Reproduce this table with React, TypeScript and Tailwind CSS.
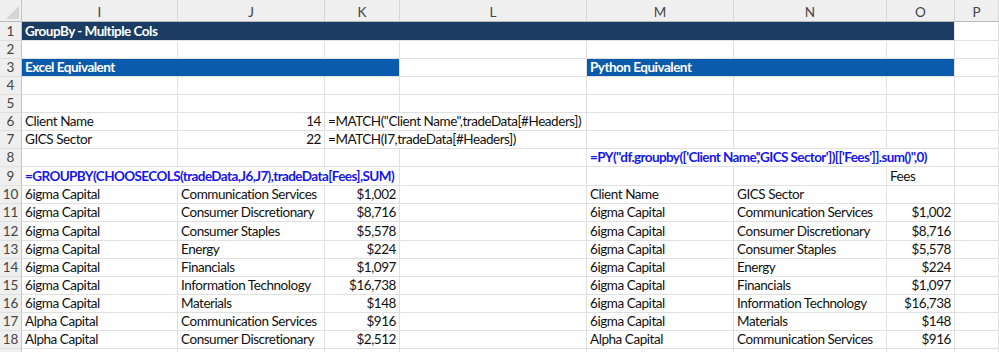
import type { ReactNode } from 'react'

// --- Config ---

const GRID = 'grid grid-cols-[22px_156px_147px_75px_187px_147px_153px_68px_1fr]'
const LETTERS = ['I', 'J', 'K', 'L', 'M', 'N', 'O', 'P']

const SPAN: Record<number, string> = {
  1: 'col-span-1',
  2: 'col-span-2',
  3: 'col-span-3',
  7: 'col-span-7',
}

type Cell = {
  col: number
  span?: number
  text?: ReactNode
  right?: boolean
  cls?: string
}

// --- Cells ---

function GridCell({ cell }: { cell: Cell }) {
  const span = cell.span ?? 1
  return (
    <div
      className={`${SPAN[span]} flex items-end overflow-visible border-r border-b border-[#e0e0e0] px-[3px] pb-[1px] whitespace-nowrap ${cell.right ? 'justify-end' : ''} ${cell.cls ?? ''}`}
    >
      {cell.text}
    </div>
  )
}

function Row({ n, h, cells = [] }: { n?: number; h: string; cells?: Cell[] }) {
  const filled: Cell[] = []
  let c = 0
  while (c < LETTERS.length) {
    const found = cells.find((x) => x.col === c)
    if (found) {
      filled.push(found)
      c += found.span ?? 1
    } else {
      filled.push({ col: c })
      c += 1
    }
  }
  return (
    <div className={`${GRID} ${h}`}>
      <div className="flex items-end justify-center border-r border-b border-r-[#c4c4c4] border-b-[#e0e0e0] bg-[#efefef] pb-[1px] tracking-normal text-[#444]">
        {n}
      </div>
      {filled.map((cell) => (
        <GridCell key={cell.col} cell={cell} />
      ))}
    </div>
  )
}

// --- Data ---

const NAVY = 'bg-[#1b3d63] border-[#1b3d63] font-bold text-white tracking-[-0.5px]'
const BLUE = 'bg-[#0b5bad] border-[#0b5bad] font-bold text-white tracking-[-0.5px]'
const FORMULA = 'font-bold tracking-[-0.6px] text-[#1515f0]'

const GROUPS: [string, string, string][] = [
  ['6igma Capital', 'Communication Services', '$1,002'],
  ['6igma Capital', 'Consumer Discretionary', '$8,716'],
  ['6igma Capital', 'Consumer Staples', '$5,578'],
  ['6igma Capital', 'Energy', '$224'],
  ['6igma Capital', 'Financials', '$1,097'],
  ['6igma Capital', 'Information Technology', '$16,738'],
  ['6igma Capital', 'Materials', '$148'],
  ['Alpha Capital', 'Communication Services', '$916'],
  ['Alpha Capital', 'Consumer Discretionary', '$2,512'],
]

const HEIGHTS: Record<number, string> = { 1: 'h-[19px]', 9: 'h-[19px]', 12: 'h-[19px]' }

export default function App() {
  const rows: { n: number; cells: Cell[] }[] = [
    { n: 1, cells: [{ col: 0, span: 7, text: 'GroupBy - Multiple Cols', cls: NAVY }] },
    { n: 2, cells: [] },
    {
      n: 3,
      cells: [
        { col: 0, span: 3, text: 'Excel Equivalent', cls: BLUE },
        { col: 4, span: 3, text: 'Python Equivalent', cls: BLUE },
      ],
    },
    { n: 4, cells: [] },
    { n: 5, cells: [] },
    {
      n: 6,
      cells: [
        { col: 0, text: 'Client Name' },
        { col: 1, text: '14', right: true },
        { col: 2, span: 2, text: '=MATCH("Client Name",tradeData[#Headers])' },
      ],
    },
    {
      n: 7,
      cells: [
        { col: 0, text: 'GICS Sector' },
        { col: 1, text: '22', right: true },
        { col: 2, span: 2, text: '=MATCH(I7,tradeData[#Headers])' },
      ],
    },
    {
      n: 8,
      cells: [
        {
          col: 4,
          span: 3,
          text: `=PY("df.groupby(['Client Name','GICS Sector'])[['Fees']].sum()",0)`,
          cls: FORMULA,
        },
      ],
    },
    {
      n: 9,
      cells: [
        {
          col: 0,
          span: 3,
          text: '=GROUPBY(CHOOSECOLS(tradeData,J6,J7),tradeData[Fees],SUM)',
          cls: FORMULA,
        },
        { col: 6, text: 'Fees' },
      ],
    },
  ]

  GROUPS.forEach((g, i) => {
    const n = 10 + i
    const cells: Cell[] = [
      { col: 0, text: g[0] },
      { col: 1, text: g[1] },
      { col: 2, text: g[2], right: true },
    ]
    if (i === 0) {
      cells.push({ col: 4, text: 'Client Name' }, { col: 5, text: 'GICS Sector' })
    } else {
      const p = GROUPS[i - 1]
      cells.push({ col: 4, text: p[0] }, { col: 5, text: p[1] }, { col: 6, text: p[2], right: true })
    }
    rows.push({ n, cells })
  })

  return (
    <div className="h-[352px] w-[999px] overflow-hidden bg-white font-['Lato',sans-serif] text-[13.5px] leading-[16px] tracking-[-0.45px] text-[#111]">
      {/* column headers */}
      <div className={`${GRID} h-[22px] border-b border-[#b8b8b8] bg-[#efefef] tracking-normal text-[#444]`}>
        <div className="relative border-r border-[#c4c4c4]">
          <svg className="absolute right-[2px] bottom-[2px]" width="13" height="13" viewBox="0 0 13 13">
            <polygon points="13,0 13,13 0,13" fill="#d5d5d5" />
          </svg>
        </div>
        {LETTERS.map((l) => (
          <div key={l} className="flex items-center justify-center border-r border-[#d6d6d6] pt-[2px]">
            {l}
          </div>
        ))}
      </div>

      {rows.map((r) => (
        <Row key={r.n} n={r.n} h={HEIGHTS[r.n] ?? 'h-[18px]'} cells={r.cells} />
      ))}
      <Row h="h-[18px]" />
    </div>
  )
}
